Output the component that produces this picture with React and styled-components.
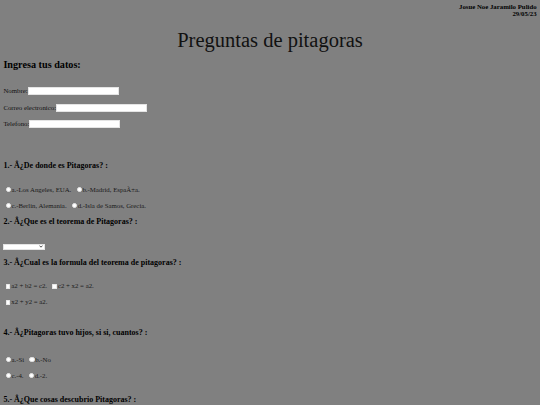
import React from "react";
import styled, { createGlobalStyle } from "styled-components";

const GlobalStyle = createGlobalStyle`
  html, body {
    margin: 0;
    padding: 0;
    overflow: hidden;
  }
  body {
    background: #808080;
    font-family: "Liberation Serif", "Times New Roman", serif;
    color: #000;
  }
`;

const questions = [
    {
        title: "1.- Â¿De donde es Pitagoras? :",
        type: "radio",
        gap: 33,
        optionsGap: 14.5,
        rows: [
            ["a.-Los Angeles, EUA.", "b.-Madrid, EspaÃ±a."],
            ["c.-Berlin, Alemania.", "d.-Isla de Samos, Grecia."],
        ],
    },
    {
        title: "2.- Â¿Que es el teorema de Pitagoras? :",
        type: "select",
        gap: 7.8,
        optionsGap: 16.7,
    },
    {
        title: "3.- Â¿Cual es la formula del teorema de pitagoras? :",
        type: "checkbox",
        gap: 8.3,
        optionsGap: 14.2,
        rows: [["a2 + b2 = c2.", "c2 + x2 = a2."], ["x2 + y2 = a2."]],
    },
    {
        title: "4.- Â¿Pitagoras tuvo hijos, si si, cuantos? :",
        type: "radio",
        gap: 21.9,
        optionsGap: 17.2,
        rows: [
            ["a.-Si", "b.-No"],
            ["c.-4.", "d.-2."],
        ],
    },
    {
        title: "5.- Â¿Que cosas descubrio Pitagoras? :",
        type: "none",
        gap: 15.3,
    },
];

const App = () => {
    return (
        <>
            <GlobalStyle />
            <Page>
                <Author>
                    Josue Noe Jaramilo Pulido
                    <br />
                    29/05/23
                </Author>
                <Title>Preguntas de pitagoras</Title>
                <SectionTitle>Ingresa tus datos:</SectionTitle>
                <Fields>
                    <Field>
                        <Label>Nombre:</Label>
                        <TextInput type="text" />
                    </Field>
                    <Field>
                        <Label>Correo electronico:</Label>
                        <TextInput type="text" />
                    </Field>
                    <Field>
                        <Label>Telefono:</Label>
                        <TextInput type="text" />
                    </Field>
                </Fields>

                {questions.map((q, qi) => (
                    <React.Fragment key={qi}>
                        <Question $gap={q.gap}>{q.title}</Question>
                        {q.type === "select" && (
                            <SelectBox $gap={q.optionsGap}>
                                <svg width="4" height="3" viewBox="0 0 4 3">
                                    <path d="M0.5 0.6 L2 2.2 L3.5 0.6" fill="none" stroke="#222" strokeWidth="0.8" />
                                </svg>
                            </SelectBox>
                        )}
                        {q.rows && (
                            <Options $gap={q.optionsGap}>
                                {q.rows.map((row, ri) => (
                                    <OptionRow key={ri}>
                                        {row.map((text, ti) => (
                                            <Choice key={ti}>
                                                {q.type === "radio" ? (
                                                    <Radio type="radio" name={`q${qi}`} />
                                                ) : (
                                                    <Check type="checkbox" />
                                                )}
                                                {text}
                                            </Choice>
                                        ))}
                                    </OptionRow>
                                ))}
                            </Options>
                        )}
                    </React.Fragment>
                ))}
            </Page>
        </>
    );
};

const Page = styled.div`
   padding: 3px 3.4px;
`;

const Author = styled.div`
   text-align: right;
   font-weight: bold;
   font-size: 6.8px;
   line-height: 7.4px;
`;

const Title = styled.h1`
   margin: 10.3px 0 0;
   text-align: center;
   font-weight: normal;
   font-size: 20.5px;
   line-height: 24px;
   color: #111;
`;

const SectionTitle = styled.h2`
   margin: 7.3px 0 0;
   font-size: 10.2px;
   line-height: 12px;
`;

const Fields = styled.div`
   display: flex;
   flex-direction: column;
   gap: 8.5px;
   margin-top: 15.6px;
`;

const Field = styled.div`
   display: flex;
   align-items: center;
   height: 8px;
`;

const Label = styled.span`
   font-size: 6.8px;
   line-height: 7.5px;
   color: #111;
`;

const TextInput = styled.input`
   box-sizing: border-box;
   width: 91px;
   height: 8px;
   margin: 0;
   padding: 0;
   background: #fff;
   border: 0.6px solid #e4e4e4;
   outline: none;
`;

const Question = styled.h3`
   margin: ${(p) => p.$gap}px 0 0;
   font-size: 8px;
   line-height: 10px;
   font-weight: bold;
`;

const Options = styled.div`
   display: flex;
   flex-direction: column;
   gap: 8px;
   margin-top: ${(p) => p.$gap}px;
`;

const OptionRow = styled.div`
   display: flex;
   align-items: center;
   gap: 3px;
   height: 8px;
`;

const Choice = styled.label`
   display: inline-flex;
   align-items: center;
   font-size: 6.8px;
   line-height: 8px;
   color: #1a1a1a;
`;

const Radio = styled.input`
   appearance: none;
   width: 5.2px;
   height: 5.2px;
   margin: 0 0.6px 0 2.3px;
   border-radius: 50%;
   background: #fff;
   border: 0.4px solid #e8e8e8;
   box-sizing: border-box;
`;

const Check = styled.input`
   appearance: none;
   width: 4.8px;
   height: 4.8px;
   margin: 0 0.8px 0 2.3px;
   border-radius: 0.5px;
   background: #fff;
   border: 0.4px solid #e8e8e8;
   box-sizing: border-box;
`;

const SelectBox = styled.div`
   display: flex;
   align-items: center;
   justify-content: flex-end;
   box-sizing: border-box;
   width: 42px;
   height: 6px;
   margin-top: ${(p) => p.$gap}px;
   padding-right: 1.3px;
   background: #fff;
   border: 0.4px solid #e4e4e4;
`;

export default App;
